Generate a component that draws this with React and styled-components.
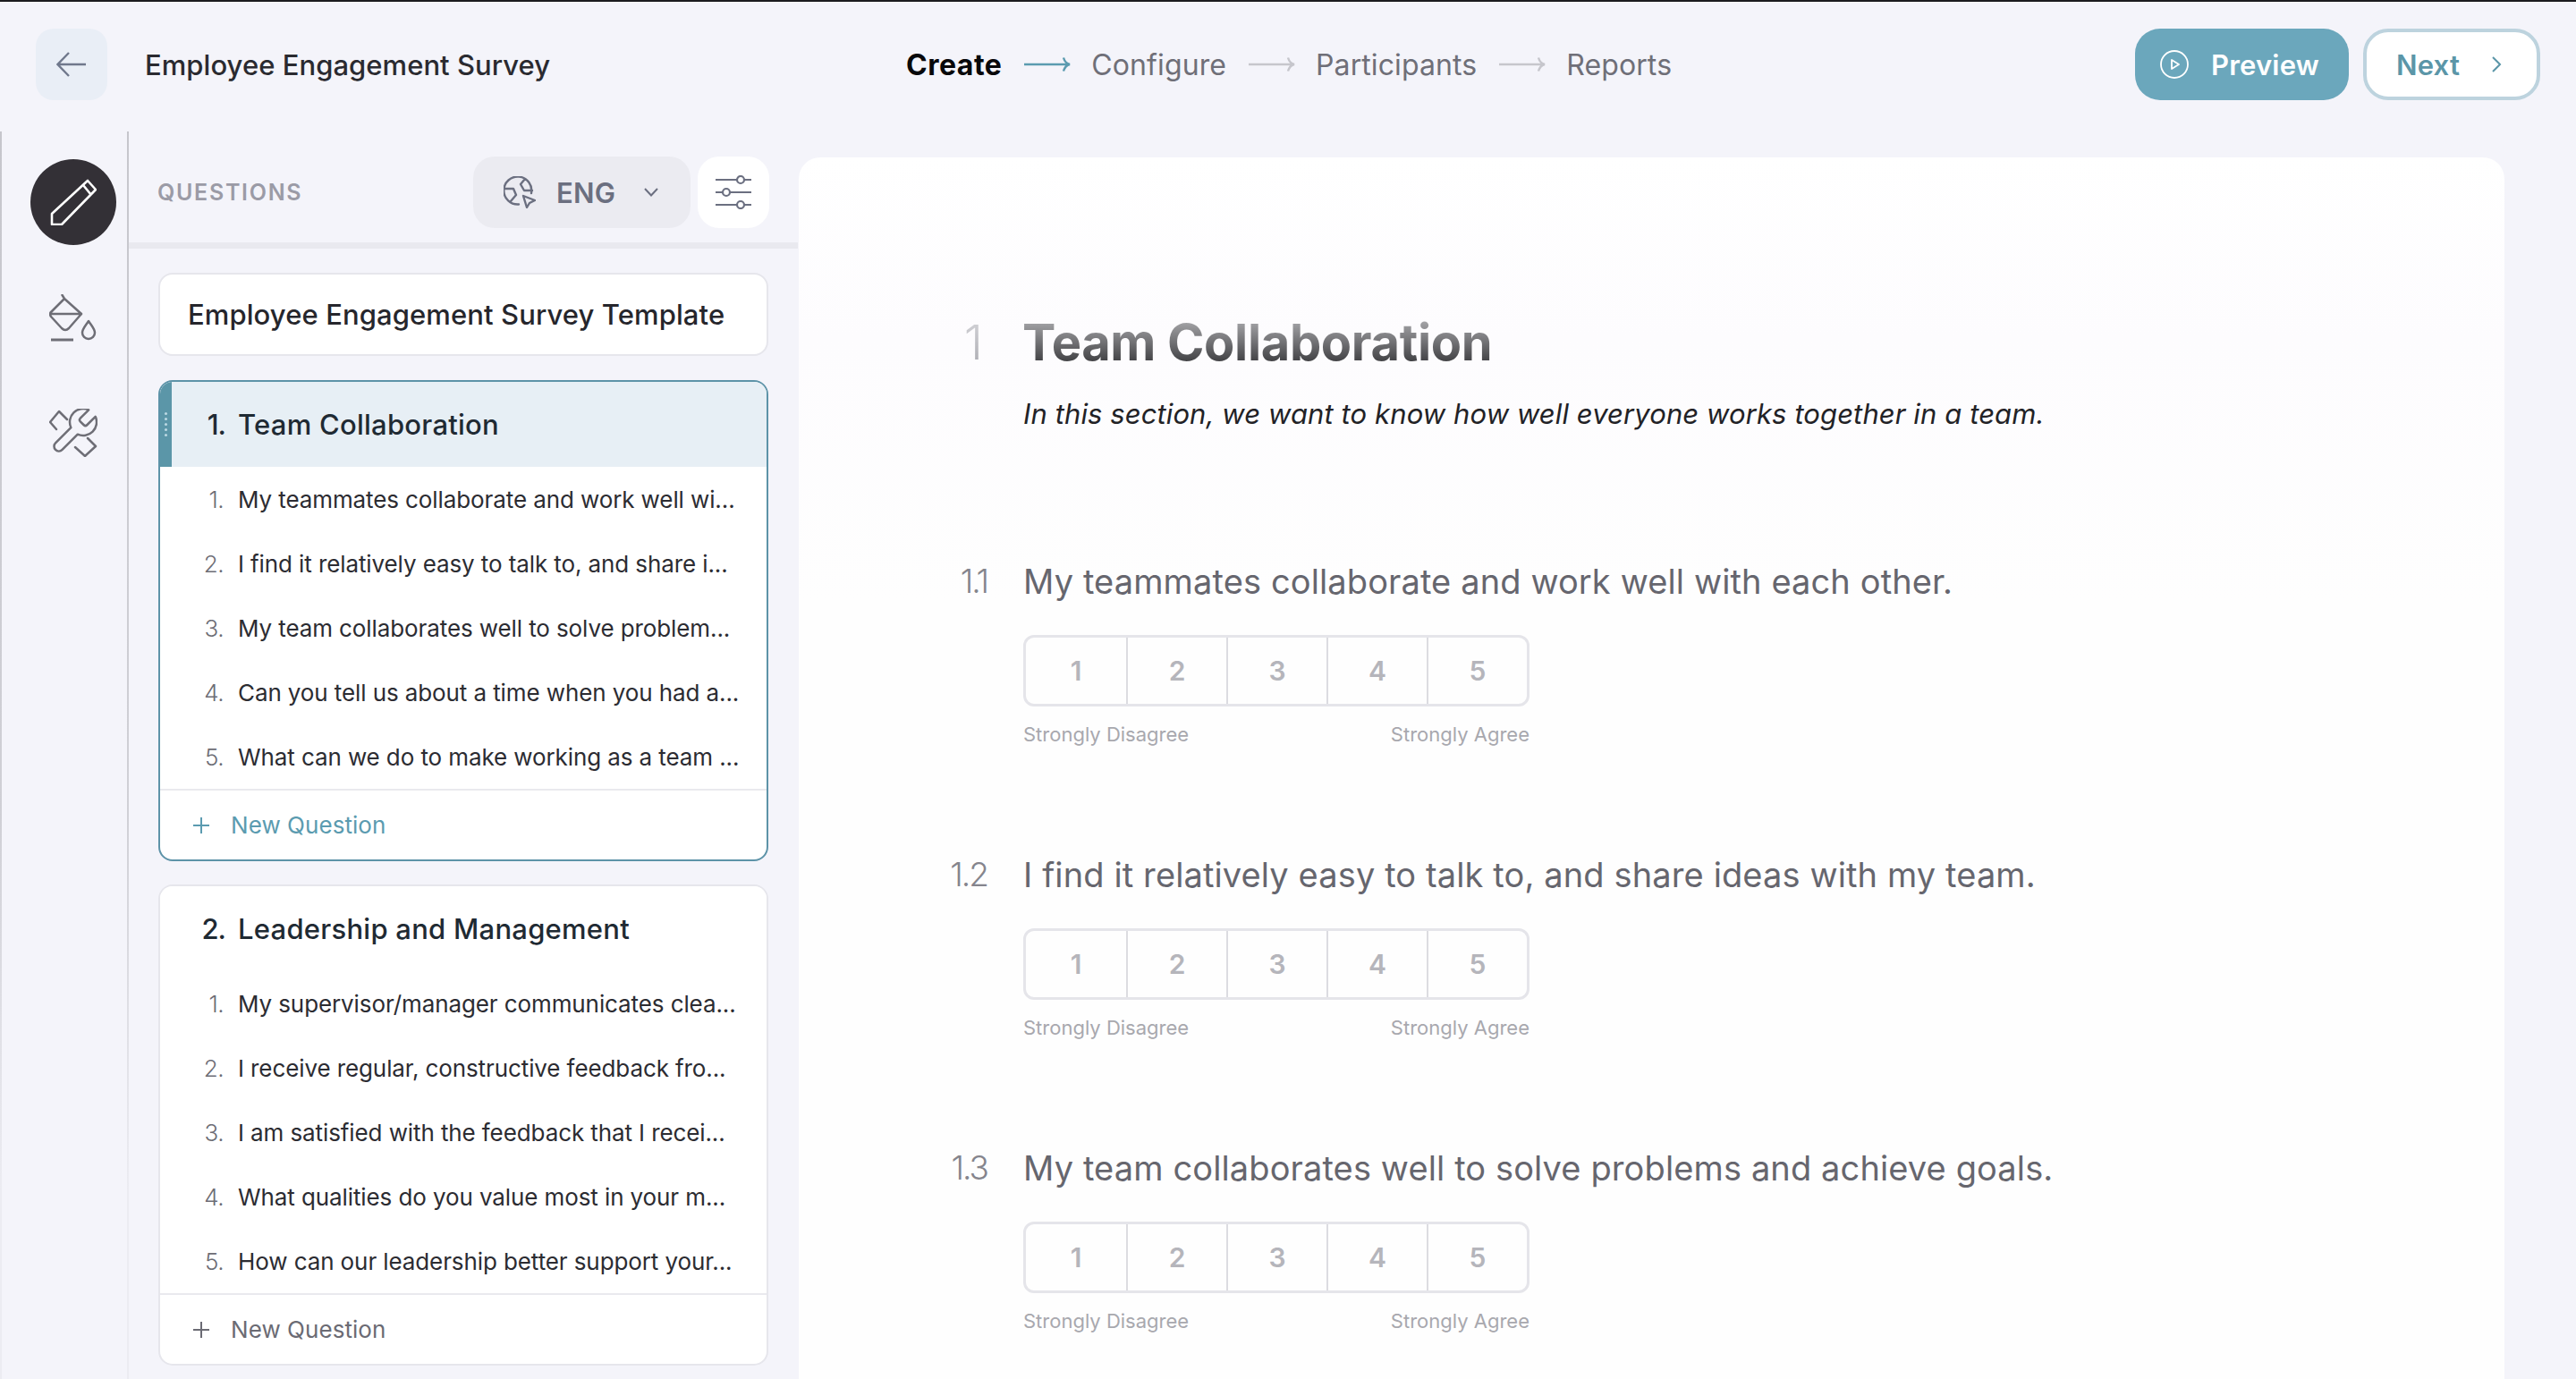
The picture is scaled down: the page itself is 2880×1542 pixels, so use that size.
import React from 'react';
import styled, { createGlobalStyle } from 'styled-components';

const Global = createGlobalStyle`
  html, body { margin: 0; padding: 0; background: #f4f4fa; }
  body { font-family: Inter, "Noto Sans", "Liberation Sans", sans-serif; overflow: hidden; }
  * { box-sizing: border-box; }
`;

const Page = styled.div`
  width: 2880px; height: 1542px; overflow: hidden; display: flex; flex-direction: column;
  background: #f4f4fa; border-top: 2px solid #1b1b1f;
`;
const Header = styled.header`
  flex: 0 0 145px; display: flex; align-items: flex-start; padding: 30px 40px 0;
`;
const HeaderLeft = styled.div`
  flex: 0 0 973px; display: flex; align-items: center; gap: 42px; height: 80px;
`;
const BackButton = styled.button`
  width: 80px; height: 80px; border: 0; border-radius: 20px; background: #e9eef6;
  display: flex; align-items: center; justify-content: center; padding: 0;
`;
const SurveyTitle = styled.h1`
  margin: 0; font-size: 31px; font-weight: 500; color: #2a2a30; letter-spacing: 0.05px; white-space: nowrap;
`;
const Steps = styled.nav`
  display: flex; align-items: center; height: 80px;
`;
const Step = styled.span`
  font-size: 32px; white-space: nowrap;
  letter-spacing: ${p => (p.$active ? 0.5 : 0.1)}px;
  font-weight: ${p => (p.$active ? 700 : 400)};
  color: ${p => (p.$active ? '#08080a' : '#6f6f78')};
`;
const StepArrow = styled.svg`
  width: 52px; height: 18px; margin: 0 23px 0 25px; flex: none;
  fill: none; stroke: ${p => (p.$active ? '#5b9bb0' : '#c6c6cc')}; stroke-width: 2.4;
`;
const Actions = styled.div`
  margin-left: auto; display: flex; gap: 16px;
`;
const PreviewButton = styled.button`
  width: 239px; height: 80px; border: 0; border-radius: 28px; background: #6ba7bc; color: #fff;
  display: flex; align-items: center; padding: 0 0 0 28px; gap: 25px;
  font: 600 31px Inter, sans-serif; letter-spacing: 0.2px;
`;
const NextButton = styled.button`
  width: 198px; height: 80px; border: 4px solid #bdd3de; border-radius: 28px; background: #fff; color: #5b96a8;
  display: flex; align-items: center; padding: 0 0 0 33px; gap: 35px;
  font: 600 31px Inter, sans-serif; letter-spacing: 0.2px;
`;
const Body = styled.div`
  flex: 1; display: flex; min-height: 0;
`;
const Rail = styled.aside`
  flex: 0 0 144px; display: flex; flex-direction: column; align-items: center; padding: 31px 0 0 20px;
  border-left: 2px solid #d2d2d8; border-right: 2px solid; border-image: linear-gradient(#c6c6cc 0%, #d0d0d6 55%, #ececf2 85%) 1;
`;
const RailActive = styled.div`
  width: 96px; height: 96px; border-radius: 50%; background: #333036; display: flex; align-items: center; justify-content: center;
`;
const RailItem = styled.div`
  height: 56px; width: 56px; margin-top: ${p => p.$top}px; display: flex; align-items: center; justify-content: center;
`;
const Panel = styled.section`
  flex: 0 0 748px; display: flex; flex-direction: column; min-height: 0;
`;
const PanelHead = styled.div`
  flex: 0 0 131px; display: flex; align-items: flex-start; padding: 28px 32px 0 32px; border-bottom: 7px solid #e9e9ef;
`;
const PanelLabel = styled.span`
  font-size: 25px; font-weight: 600; color: #9b9ba6; letter-spacing: 1.7px; line-height: 80px; margin-right: auto;
`;
const LangPill = styled.div`
  width: 243px; height: 80px; border-radius: 24px; background: #ebebf1; display: flex; align-items: center; padding-left: 34px;
  color: #6b6f80; font-size: 31px; font-weight: 600;
`;
const LangCode = styled.span`
  margin: 0 32px 0 23px; letter-spacing: 0.2px;
`;
const FilterButton = styled.div`
  width: 80px; height: 80px; margin-left: 8px; border-radius: 24px; background: #fff; display: flex; align-items: center; justify-content: center;
`;
const PanelList = styled.div`
  display: flex; flex-direction: column; gap: 26px; padding: 27px 33px 0 33px;
`;
const TemplateBox = styled.div`
  height: 93px; margin-bottom: 1px; border: 2px solid #e6e6ec; border-radius: 16px; background: #fff; display: flex; align-items: center; padding-left: 31px;
  font-size: 31px; font-weight: 500; color: #26262c; letter-spacing: 0.1px; white-space: nowrap;
`;
const Card = styled.div`
  border: 2px solid ${p => (p.$active ? '#5d93a8' : '#e6e6ec')}; border-radius: 16px; background: #fff; overflow: hidden;
`;
const CardHead = styled.div`
  height: 95px; display: flex; align-items: center; background: ${p => (p.$active ? '#e7eff5' : '#fff')};
`;
const Accent = styled.div`
  flex: 0 0 13px; align-self: stretch; background: #5b96a8; display: flex; flex-direction: column; align-items: center; justify-content: center; gap: 3px;
`;
const GripDot = styled.i`
  width: 3px; height: 3px; border-radius: 50%; background: #bcd9e3;
`;
const CardNum = styled.span`
  flex: 0 0 ${p => (p.$active ? 60 : 73)}px; text-align: right; font-size: 31px; font-weight: 500; color: #1f2a33; letter-spacing: -1px;
`;
const CardTitle = styled.span`
  margin-left: 14px; font-size: 31px; font-weight: 500; color: #1f2a33; letter-spacing: 0.25px; white-space: nowrap;
`;
const Row = styled.div`
  height: 72px; display: flex; align-items: center;
`;
const RowNum = styled.span`
  flex: 0 0 71px; text-align: right; font-size: 26px; font-weight: 300; color: #6d6d75; letter-spacing: -0.5px;
`;
const RowText = styled.span`
  margin-left: 16px; font-size: 26px; color: #2c2c32; letter-spacing: -0.1px; white-space: nowrap;
`;
const CardFoot = styled.div`
  height: 79px; border-top: 2px solid #e9e9ee; display: flex; align-items: center; padding-left: 37px; gap: 24px;
  font-size: 26px; letter-spacing: 0.05px; color: ${p => (p.$active ? '#5b9bb0' : '#6b6b74')};
`;
const Canvas = styled.main`
  flex: 0 0 1907px; margin: 29px 0 0 1px; border-radius: 24px 24px 0 0;
  background: linear-gradient(#ffffff 0, #fdfcfe 200px, #fefefe 500px);
  padding-top: 174px;
`;
const SectionRow = styled.div`
  display: grid; grid-template-columns: 206px 1fr; column-gap: 44px; align-items: center; height: 64px;
`;
const SectionNum = styled.span`
  text-align: right; font-size: 54px; font-weight: 300; background: linear-gradient(#d8d8dc, #a8a8ae); -webkit-background-clip: text; background-clip: text; color: transparent;
`;
const SectionTitle = styled.h2`
  margin: 0; font-size: 56px; font-weight: 700; letter-spacing: -0.35px; line-height: 64px; white-space: nowrap;
  background: linear-gradient(#a5a5a8 12%, #444447 82%); -webkit-background-clip: text; background-clip: text; color: transparent;
`;
const Subtitle = styled.p`
  margin: 29px 0 0 251px; font-size: 31px; line-height: 40px; font-style: italic; color: #222226; letter-spacing: 0.1px; white-space: nowrap;
`;
const Question = styled.section`
  display: grid; grid-template-columns: 211px 1fr; column-gap: 40px; margin-top: ${p => p.$top}px;
`;
const QNum = styled.span`
  text-align: right; font-size: 37px; line-height: 48px; font-weight: 300; color: #85858d; letter-spacing: -2px;
`;
const QBody = styled.div`
  display: flex; flex-direction: column;
`;
const QText = styled.h3`
  margin: 0; font-size: 38px; line-height: 48px; font-weight: 400; color: #66666e; letter-spacing: 0.12px; white-space: nowrap;
`;
const Scale = styled.div`
  width: 566px; height: 80px; margin-top: 36px; border: 3px solid #e5e5ea; border-radius: 12px; display: grid; grid-template-columns: repeat(5, 1fr);
`;
const ScaleCell = styled.div`
  display: flex; align-items: center; justify-content: center; font-size: 30px; font-weight: 600; color: #b5b5bb;
  &:not(:first-child) { border-left: 2px solid #dcdce1; }
`;
const ScaleLabels = styled.div`
  width: 566px; margin-top: 15px; display: flex; justify-content: space-between; font-size: 22px; line-height: 32px; color: #a8a8ae;
`;

const StepArrowIcon = ({ active }) => (
  <StepArrow $active={active} viewBox="0 0 52 18"><path d="M0 9H51M44 1.5C45 5 47 8 51 9C47 10 45 13 44 16.5" /></StepArrow>
);

const questionsA = [
  'My teammates collaborate and work well wi...',
  'I find it relatively easy to talk to, and share i...',
  'My team collaborates well to solve problem...',
  'Can you tell us about a time when you had a...',
  'What can we do to make working as a team ...',
];
const questionsB = [
  'My supervisor/manager communicates clea...',
  'I receive regular, constructive feedback fro...',
  'I am satisfied with the feedback that I recei...',
  'What qualities do you value most in your m...',
  'How can our leadership better support your...',
];
const survey = [
  { n: '1.1', t: 'My teammates collaborate and work well with each other.', top: 143 },
  { n: '1.2', t: 'I find it relatively easy to talk to, and share ideas with my team.', top: 117 },
  { n: '1.3', t: 'My team collaborates well to solve problems and achieve goals.', top: 117 },
];

const SectionCard = ({ active, num, title, items }) => (
  <Card $active={active}>
    <CardHead $active={active}>
      {active && <Accent>{[0, 1, 2, 3, 4].map(i => <GripDot key={i} />)}</Accent>}
      <CardNum $active={active}>{num}</CardNum>
      <CardTitle>{title}</CardTitle>
    </CardHead>
    {items.map((q, i) => (
      <Row key={q}><RowNum>{i + 1}.</RowNum><RowText>{q}</RowText></Row>
    ))}
    <CardFoot $active={active}>
      <svg width="18" height="18" viewBox="0 0 18 18" fill="none" stroke={active ? '#5b9bb0' : '#6b6b74'} strokeWidth="2"><path d="M9 0V18M0 9H18" /></svg>
      New Question
    </CardFoot>
  </Card>
);

export default function App() {
  return (
    <Page>
      <Global />
      <Header>
        <HeaderLeft>
          <BackButton aria-label="Back">
            <svg width="34" height="28" viewBox="0 0 34 28" fill="none" stroke="#70788c" strokeWidth="2.4"><path d="M33 14H2M14 1L1.5 14L14 27" /></svg>
          </BackButton>
          <SurveyTitle>Employee Engagement Survey</SurveyTitle>
        </HeaderLeft>
        <Steps>
          <Step $active>Create</Step><StepArrowIcon active />
          <Step>Configure</Step><StepArrowIcon />
          <Step>Participants</Step><StepArrowIcon />
          <Step>Reports</Step>
        </Steps>
        <Actions>
          <PreviewButton>
            <svg width="32" height="32" viewBox="0 0 32 32" fill="none" stroke="#fff" strokeWidth="1.8"><circle cx="16" cy="16" r="15" /><path d="M13 11L21 16L13 21Z" strokeLinejoin="round" /></svg>
            Preview
          </PreviewButton>
          <NextButton>
            Next
            <svg width="12" height="18" viewBox="0 0 12 18" fill="none" stroke="#5b96a8" strokeWidth="2"><path d="M2 1L10 9L2 17" /></svg>
          </NextButton>
        </Actions>
      </Header>
      <Body>
        <Rail>
          <RailActive>
            <svg width="52" height="52" viewBox="0 0 52 52" fill="none" stroke="#fff" strokeWidth="2.6" strokeLinejoin="round"><path d="M2 39L42 2L51 12L13 51H2ZM37 7L46 18" /></svg>
          </RailActive>
          <RailItem $top={54}>
            <svg width="54" height="54" viewBox="0 0 54 54" fill="none" stroke="#6e6e76" strokeWidth="2.5" strokeLinejoin="round"><path d="M14 0L17 5L36 22L22 38Q18 42 14 38L2 25Q0 22 2 20L17 5M1 22H37" /><path d="M2 51H27" strokeWidth="3" /><path d="M44 30C40 36 37 39 37 43A7 7 0 0 0 51 43C51 39 48 36 44 30Z" /></svg>
          </RailItem>
          <RailItem $top={72}>
            <svg width="54" height="54" viewBox="0 0 54 54" fill="none" stroke="#6e6e76" strokeWidth="2.5" strokeLinejoin="round" strokeLinecap="round">
              <path d="M8 23L1 15L11 3L20 12M43 33L52 42L40 53L29 43" />
              <g transform="translate(-2 -5) scale(2.5)" strokeWidth="1"><path d="M14.7 6.3a1 1 0 0 0 0 1.4l1.6 1.6a1 1 0 0 0 1.4 0l3.77-3.77a6 6 0 0 1-7.94 7.94l-6.91 6.91a2.12 2.12 0 0 1-3-3l6.91-6.91a6 6 0 0 1 7.94-7.94l-3.76 3.76z" /></g>
            </svg>
          </RailItem>
        </Rail>
        <Panel>
          <PanelHead>
            <PanelLabel>QUESTIONS</PanelLabel>
            <LangPill>
              <svg width="36" height="36" viewBox="0 0 36 36" fill="none" stroke="#6b6f80" strokeWidth="2.4" strokeLinejoin="round" strokeLinecap="round">
                <path d="M31 19A15.5 15.5 0 1 0 17 31.5M2 14H11L14 21L8 28M24 3L19 9L23 16H32" />
                <path d="M22 22L35 27L29 30L26 35Z" />
              </svg>
              <LangCode>ENG</LangCode>
              <svg width="16" height="10" viewBox="0 0 16 10" fill="none" stroke="#6b6f80" strokeWidth="2"><path d="M1 1L8 8.5L15 1" /></svg>
            </LangPill>
            <FilterButton>
              <svg width="40" height="38" viewBox="0 0 40 38" fill="none" stroke="#6b6f80" strokeWidth="2.2"><path d="M0 5H24M32 5H40M0 19H8M16 19H40M0 33H24M32 33H40" /><circle cx="28" cy="5" r="4" /><circle cx="12" cy="19" r="4" /><circle cx="28" cy="33" r="4" /></svg>
            </FilterButton>
          </PanelHead>
          <PanelList>
            <TemplateBox>Employee Engagement Survey Template</TemplateBox>
            <SectionCard active num="1." title="Team Collaboration" items={questionsA} />
            <SectionCard num="2." title="Leadership and Management" items={questionsB} />
          </PanelList>
        </Panel>
        <Canvas>
          <SectionRow>
            <SectionNum>1</SectionNum>
            <SectionTitle>Team Collaboration</SectionTitle>
          </SectionRow>
          <Subtitle>In this section, we want to know how well everyone works together in a team.</Subtitle>
          {survey.map(q => (
            <Question key={q.n} $top={q.top}>
              <QNum>{q.n}</QNum>
              <QBody>
                <QText>{q.t}</QText>
                <Scale>{[1, 2, 3, 4, 5].map(v => <ScaleCell key={v}>{v}</ScaleCell>)}</Scale>
                <ScaleLabels><span>Strongly Disagree</span><span>Strongly Agree</span></ScaleLabels>
              </QBody>
            </Question>
          ))}
        </Canvas>
      </Body>
    </Page>
  );
}
